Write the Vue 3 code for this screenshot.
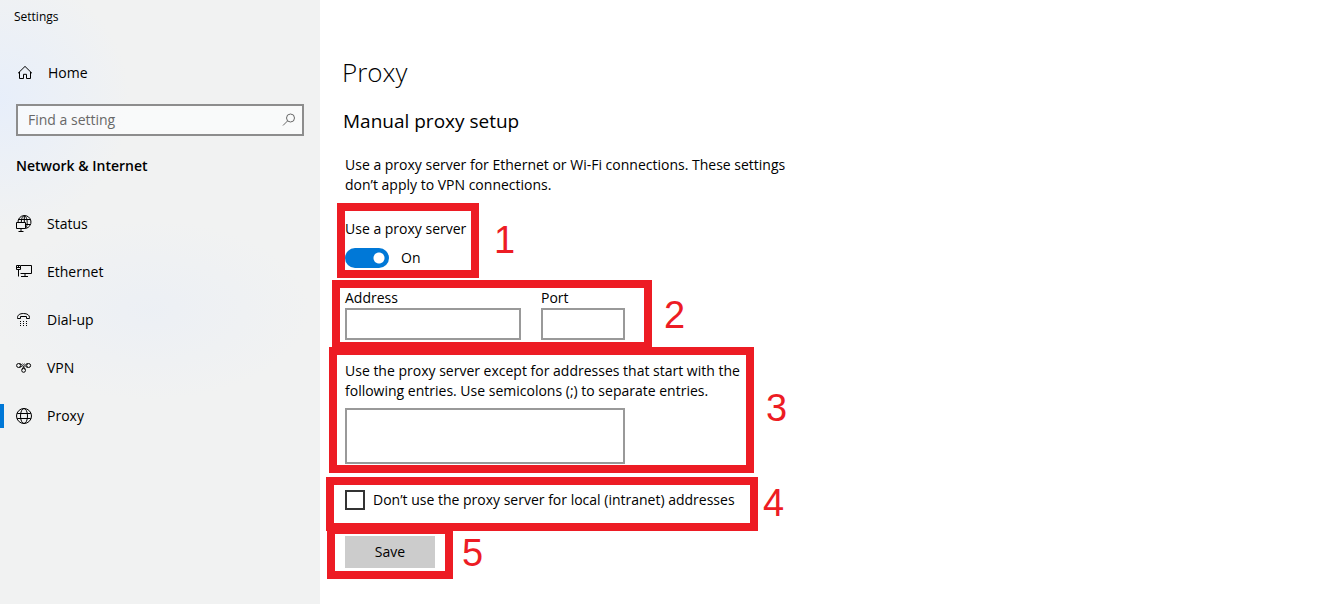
<script setup>
import { ref } from 'vue'

const search = ref('')
const current = ref('Proxy')
const enabled = ref(true)
const address = ref('')
const port = ref('')
const exceptions = ref('')
const bypassLocal = ref(false)
const items = ['Status', 'Ethernet', 'Dial-up', 'VPN', 'Proxy']
</script>

<template>
  <div class="settings">
    <aside class="sidebar">
      <div class="window-title">Settings</div>
      <a class="home" href="#home">
        <svg class="icon" viewBox="0 0 16 16" aria-hidden="true">
          <path d="M1 8.3 8 1.4l7 6.9M2.5 7v6.5h4V9.3h3v4.2h4V7" />
        </svg>
        <span>Home</span>
      </a>
      <div class="search">
        <input v-model="search" type="text" placeholder="Find a setting" aria-label="Find a setting" />
        <svg class="icon search-icon" viewBox="0 0 16 16" aria-hidden="true">
          <circle cx="9.5" cy="6" r="4" />
          <path d="M6.6 8.9 2 13.5" />
        </svg>
      </div>
      <h2 class="category">Network &amp; Internet</h2>
      <nav class="nav">
        <a
          v-for="item in items"
          :key="item"
          href="#settings"
          class="nav-item"
          :class="{ active: item === current }"
          @click.prevent="current = item"
        >
          <svg v-if="item === 'Status'" class="icon" viewBox="0 0 16 16" aria-hidden="true">
            <path d="M2 6.5A6.5 6.5 0 1 1 9.8 12.4M5.3 6.5C5.3 2.4 6.6-.2 8.2-.2s3 2.9 3 6.7c0 2.2-.4 4-1.2 5.2M2.6 3.5h11.6M10 8.5h4.5M8.3 0v6.5" />
            <path d="M.5 6.5h9v6h-9zM5 12.5v2.8M2.5 15.5h5" />
          </svg>
          <svg v-else-if="item === 'Ethernet'" class="icon" viewBox="0 0 16 16" aria-hidden="true">
            <path d="M5 1.5h10.5v8H4.5M9 9.5v3M5 12.5h7" />
            <path d="M.5 1.5h4v4h-4zM2.5 5.5v7M.5 3.5h4M2.5 1.5v2" />
          </svg>
          <svg v-else-if="item === 'Dial-up'" class="icon" viewBox="0 0 16 16" aria-hidden="true">
            <path d="M1.5 6.5v-1C1.5 3.2 3.6 1.5 7.5 1.5s6 1.7 6 4v1h-3v-2h-6v2z" />
            <path class="dots" d="M4 9h1v1H4zM7 9h1v1H7zM10 9h1v1h-1zM4 11h1v1H4zM7 11h1v1H7zM10 11h1v1h-1zM4 13h1v1H4zM7 13h1v1H7zM10 13h1v1h-1z" />
          </svg>
          <svg v-else-if="item === 'VPN'" class="icon" viewBox="0 0 16 16" aria-hidden="true">
            <circle cx="2.6" cy="5.5" r="2" />
            <circle cx="12.6" cy="5.5" r="2" />
            <circle cx="7.6" cy="10.4" r="1.9" />
            <path d="M3.5 3.7c2 0 2.5 1.6 4 3.1l1.8 2.4M11.7 3.7c-2 0-2.5 1.6-4 3.1L5.9 9.2M3.5 7.3c1.1 0 1.7-.5 2.4-1.3M11.7 7.3c-1.1 0-1.7-.5-2.4-1.3M6.5 3.8l1.1 1 1.1-1" />
          </svg>
          <svg v-else class="icon" viewBox="0 0 16 16" aria-hidden="true">
            <circle cx="8" cy="8" r="7.5" />
            <ellipse cx="8" cy="8" rx="3.5" ry="7.5" />
            <path d="M1.2 5.5h13.6M1.2 10.5h13.6" />
          </svg>
          <span>{{ item }}</span>
        </a>
      </nav>
    </aside>

    <main class="content">
      <h1>Proxy</h1>
      <h2 class="subtitle">Manual proxy setup</h2>
      <p class="intro">Use a proxy server for Ethernet or Wi-Fi connections. These settings don’t apply to VPN connections.</p>

      <section class="group toggle-group">
        <label for="use-proxy">Use a proxy server</label>
        <div class="toggle-row">
          <input id="use-proxy" v-model="enabled" class="switch" type="checkbox" role="switch" />
          <span>{{ enabled ? 'On' : 'Off' }}</span>
        </div>
        <div class="mark mark-1"><span>1</span></div>
      </section>

      <section class="group address-group">
        <div class="field address">
          <label for="address">Address</label>
          <input id="address" v-model="address" type="text" />
        </div>
        <div class="field port">
          <label for="port">Port</label>
          <input id="port" v-model="port" type="text" />
        </div>
        <div class="mark mark-2"><span>2</span></div>
      </section>

      <section class="group exceptions-group">
        <label for="exceptions">Use the proxy server except for addresses that start with the following entries. Use semicolons (;) to separate entries.</label>
        <textarea id="exceptions" v-model="exceptions"></textarea>
        <div class="mark mark-3"><span>3</span></div>
      </section>

      <section class="group local-group">
        <input id="local" v-model="bypassLocal" type="checkbox" />
        <label for="local">Don’t use the proxy server for local (intranet) addresses</label>
        <div class="mark mark-4"><span>4</span></div>
      </section>

      <section class="group save-group">
        <button type="button">Save</button>
        <div class="mark mark-5"><span>5</span></div>
      </section>
    </main>
  </div>
</template>

<style>
body {
  margin: 0;
  background: #fff;
}
</style>

<style scoped>
* {
  box-sizing: border-box;
}

.settings {
  display: grid;
  grid-template-columns: 320px 1fr;
  min-height: 100vh;
  color: #000;
  font-family: "Segoe UI", "Open Sans", "Noto Sans", sans-serif;
  font-size: 14px;
  line-height: 20px;
}

.sidebar {
  padding-top: 7px;
  background:
    radial-gradient(circle at 0 100px, rgba(230, 238, 251, 0.9), rgba(230, 238, 251, 0) 130px),
    radial-gradient(ellipse 160px 90px at 150px 310px, rgba(235, 239, 245, 0.8), rgba(235, 239, 245, 0)),
    #f1f2f2;
}

.window-title {
  padding-left: 14px;
  font-size: 12px;
  line-height: 20px;
}

.icon {
  flex: none;
  width: 16px;
  height: 16px;
  overflow: visible;
  fill: none;
  stroke: #000;
  stroke-width: 1;
}

.icon .dots {
  fill: #000;
  stroke: none;
}

.home {
  display: flex;
  align-items: center;
  gap: 15px;
  height: 32px;
  margin-top: 30px;
  padding-left: 17px;
  color: inherit;
  text-decoration: none;
}

.search {
  display: flex;
  align-items: center;
  height: 32px;
  margin: 15px 16px 0;
  padding: 0 5px 0 10px;
  border: 2px solid #8d8d8d;
  background: rgba(255, 255, 255, 0.6);
}

.search input {
  flex: 1;
  min-width: 0;
  padding: 0;
  border: 0;
  outline: 0;
  background: none;
  color: inherit;
  font: inherit;
}

.search input::placeholder {
  color: #686868;
  opacity: 1;
}

.icon.search-icon {
  stroke: #686868;
}

.category {
  margin: 20px 16px 0;
  font-size: 14px;
  font-weight: 600;
  line-height: 20px;
}

.nav {
  margin-top: 24px;
}

.nav-item {
  display: flex;
  align-items: center;
  gap: 15px;
  height: 48px;
  padding-left: 16px;
  color: inherit;
  text-decoration: none;
}

.nav-item.active {
  background: linear-gradient(#0078d7, #0078d7) 0 50% / 4px 24px no-repeat;
}

.content {
  padding: 52px 25px 24px;
}

h1 {
  margin: 0 0 0 -3px;
  font-size: 26px;
  font-weight: 300;
  line-height: 40px;
}

.subtitle {
  margin: 15px 0 0 -2px;
  font-size: 19px;
  font-weight: 400;
  line-height: 28px;
}

.intro {
  max-width: 460px;
  margin: 20px 0 0;
}

.group {
  position: relative;
}

.group label {
  display: block;
}

.toggle-group {
  margin-top: 24px;
}

.toggle-row {
  display: flex;
  align-items: center;
  gap: 12px;
  margin-top: 9px;
}

.switch {
  appearance: none;
  width: 44px;
  height: 20px;
  margin: 0;
  border-radius: 10px;
  background: radial-gradient(circle at 10px 50%, #fff 5px, transparent 6px) #777;
}

.switch:checked {
  background: radial-gradient(circle at 34px 50%, #fff 5px, transparent 6px) #0078d7;
}

.address-group {
  display: flex;
  gap: 20px;
  margin-top: 20px;
}

.field input,
textarea {
  display: block;
  width: 100%;
  height: 32px;
  margin: 0;
  padding: 4px 8px;
  border: 2px solid #999;
  border-radius: 0;
  outline: 0;
  background: #fff;
  color: inherit;
  font: inherit;
}

.address {
  width: 176px;
}

.port {
  width: 84px;
}

.exceptions-group {
  max-width: 408px;
  margin-top: 21px;
}

textarea {
  width: 280px;
  height: 56px;
  margin-top: 7px;
  resize: none;
}

.local-group {
  display: flex;
  align-items: center;
  gap: 8px;
  margin-top: 26px;
}

.local-group input {
  appearance: none;
  width: 20px;
  height: 20px;
  margin: 0;
  border: 2px solid #333;
  background: #fff;
}

.local-group input:checked {
  background: #0078d7;
}

.save-group {
  margin-top: 26px;
}

button {
  display: block;
  width: 90px;
  height: 32px;
  padding: 0;
  border: 0;
  background: #ccc;
  color: inherit;
  font: inherit;
}

/* Numbered callouts drawn over the form groups */
.mark {
  position: absolute;
  border: 8px solid #ed1c24;
  pointer-events: none;
}

.mark span {
  position: absolute;
  left: 100%;
  color: #ed1c24;
  font-family: Arial, "Liberation Sans", sans-serif;
  font-size: 38px;
  line-height: 38px;
}

.mark-1 {
  top: -16px;
  left: -8px;
  width: 142px;
  height: 75px;
}

.mark-2 {
  top: -8px;
  left: -13px;
  width: 320px;
  height: 70px;
}

.mark-3 {
  top: -14px;
  left: -16px;
  width: 425px;
  height: 126px;
}

.mark-4 {
  top: -13px;
  left: -19px;
  width: 432px;
  height: 54px;
}

.mark-5 {
  top: -10px;
  left: -18px;
  width: 126px;
  height: 53px;
}

.mark-1 span {
  top: 10px;
  margin-left: 23px;
}

.mark-2 span {
  top: 8px;
  margin-left: 20px;
}

.mark-3 span {
  top: 34px;
  margin-left: 20px;
}

.mark-4 span {
  top: -1px;
  margin-left: 13px;
}

.mark-5 span {
  top: 0;
  margin-left: 17px;
}
</style>
